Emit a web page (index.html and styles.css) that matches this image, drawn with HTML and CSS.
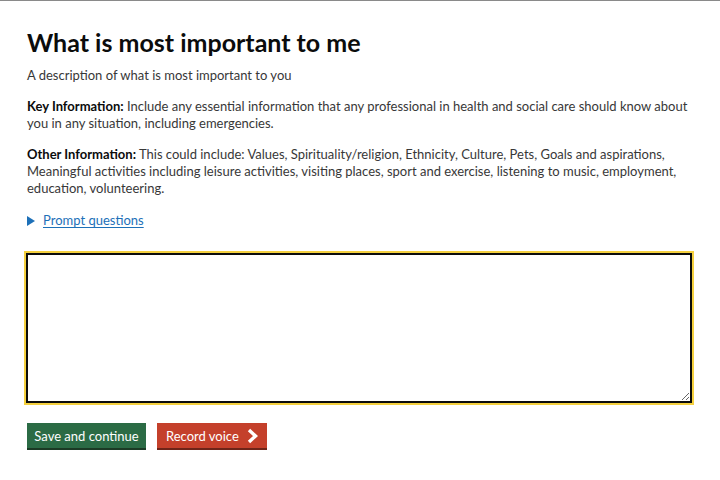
FILE: index.html
```html
<!DOCTYPE html>
<html lang="en">
<head>
    <meta charset="UTF-8">
    <meta name="viewport" content="width=device-width, initial-scale=1.0">
    <title>What is most important to me</title>
    <link rel="stylesheet" href="styles.css">
</head>
<body>
    <main class="page">
        <h1 class="page-title">What is most important to me</h1>
        <p class="hint">A description of what is most important to you</p>

        <p class="info"><strong>Key Information:</strong> Include any essential information that any professional in health and social care should know about you in any situation, including emergencies.</p>

        <p class="info"><strong>Other Information:</strong> This could include: Values, Spirituality/religion, Ethnicity, Culture, Pets, Goals and aspirations, Meaningful activities including leisure activities, visiting places, sport and exercise, listening to music, employment, education, volunteering.</p>

        <div class="details">
            <span class="details-arrow"></span>
            <a href="#" class="details-link">Prompt questions</a>
        </div>

        <textarea class="answer"></textarea>

        <div class="actions">
            <button class="btn btn-save">Save and continue</button>
            <button class="btn btn-record">Record voice
                <svg class="chevron" width="13" height="16" viewBox="0 0 13 16"><path d="M3 2 L9.5 8 L3 14" fill="none" stroke="#fff" stroke-width="3.4"/></svg>
            </button>
        </div>
    </main>
</body>
</html>
```

FILE: styles.css
```css
html, body {
    margin: 0;
    padding: 0;
}

body {
    background: #fff;
    border-top: 1px solid #8a8a8a;
    font-family: Lato, Arial, sans-serif;
    color: #383838;
}

.page {
    padding: 26px 27px 0 27px;
}

.page-title {
    margin: 0 0 10px;
    font-size: 25px;
    line-height: 30px;
    font-weight: 700;
    color: #0b0c0c;
}

.hint {
    margin: 0 0 14px;
    font-size: 13px;
    line-height: 17px;
}

.info {
    margin: 0 0 14px;
    font-size: 13px;
    line-height: 17px;
    width: 666px;
}

.info strong {
    color: #0b0c0c;
}

.details {
    display: flex;
    align-items: center;
    gap: 8px;
    margin-top: 15px;
    font-size: 13px;
    line-height: 17px;
}

.details-arrow {
    width: 0;
    height: 0;
    border-left: 8px solid #1d70b8;
    border-top: 5px solid transparent;
    border-bottom: 5px solid transparent;
}

.details-link {
    color: #1d70b8;
    text-decoration: underline;
    text-underline-offset: 2px;
}

.answer {
    display: block;
    box-sizing: border-box;
    width: 666px;
    height: 150px;
    margin: 24px 0 0 -1px;
    border: 2px solid #0b0c0c;
    outline: 2px solid #f4d03f;
    border-radius: 0;
    padding: 4px;
    resize: vertical;
    font-family: inherit;
}

.actions {
    display: flex;
    gap: 11px;
    margin-top: 20px;
}

.btn {
    display: flex;
    align-items: center;
    box-sizing: border-box;
    height: 27px;
    border: none;
    border-bottom: 2px solid #1b3a25;
    color: #fff;
    font-family: inherit;
    font-size: 13px;
    white-space: nowrap;
}

.btn-save {
    background: #2b6b45;
    width: 119px;
    padding: 0 8px;
    justify-content: center;
}

.btn-record {
    background: #c4402b;
    border-bottom-color: #6e2418;
    padding: 0 8px 0 9px;
    gap: 7px;
}

.chevron {
    flex-shrink: 0;
}
```
